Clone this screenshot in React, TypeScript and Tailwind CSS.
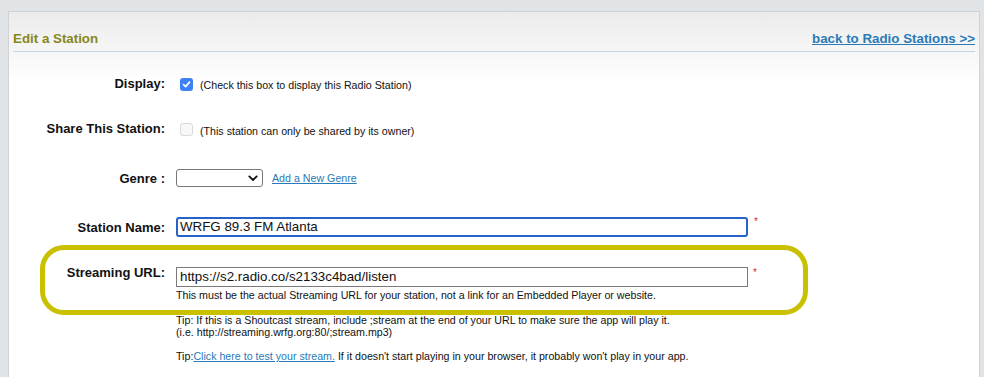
import React from "react";

const font = { fontFamily: '"Liberation Sans", Arial, Helvetica, sans-serif' };

function Checked() {
  return (
    <span className="ml-[4px] mt-[2px] inline-flex h-[13px] w-[13px] items-center justify-center rounded-[3px] bg-[#3c82f6]">
      <svg width="9" height="9" viewBox="0 0 10 10">
        <path d="M1.8 5.2 L4.1 7.4 L8.3 2.4" fill="none" stroke="#fff" strokeWidth="1.9" strokeLinecap="round" strokeLinejoin="round" />
      </svg>
    </span>
  );
}

function Disabled() {
  return <span className="ml-[4px] mt-[2px] inline-block h-[13px] w-[13px] rounded-[3px] border border-[#d9d9d9] bg-[#f8f8f8]" />;
}

function Label({ children }: { children: React.ReactNode }) {
  return <div className="w-[167px] shrink-0 pr-[11px] text-right text-[13px] font-bold leading-[15px] text-[#111]">{children}</div>;
}

export default function App() {
  return (
    <div className="min-h-[377px] bg-[#e1e4e7] pl-[8px] pr-[4px] pt-[11px]" style={font}>
      {/* Panel */}
      <div className="relative h-[400px] border border-[#d2d2d2] bg-[linear-gradient(to_bottom,#ebebeb,#ffffff_70px)]">
        {/* Header */}
        <div className="mx-[4px] flex items-end justify-between border-b border-[#c5d5e9] pb-[4px] pt-[19px]">
          <span className="text-[13.33px] font-bold leading-[16px] text-[#87871a]">Edit a Station</span>
          <a href="#" className="text-[13.33px] font-bold leading-[16px] text-[#2b7ab7] underline">
            back to Radio Stations &gt;&gt;
          </a>
        </div>

        {/* Display */}
        <div className="mt-[24px] flex items-start">
          <Label>Display:</Label>
          <Checked />
          <span className="ml-[7px] mt-[3px] text-[10.67px] leading-[12px] text-[#111]">(Check this box to display this Radio Station)</span>
        </div>

        {/* Share */}
        <div className="mt-[30px] flex items-start">
          <Label>Share This Station:</Label>
          <Disabled />
          <span className="ml-[7px] mt-[4px] text-[10.67px] leading-[12px] text-[#111]">(This station can only be shared by its owner)</span>
        </div>

        {/* Genre */}
        <div className="mt-[32px] flex items-center">
          <Label>Genre :</Label>
          <div className="flex h-[18px] w-[87px] items-center justify-end rounded-[3px] border border-[#777] bg-white pr-[4px]">
            <svg width="10" height="7" viewBox="0 0 10 7">
              <path d="M1.3 1.4 L5 5 L8.7 1.4" fill="none" stroke="#111" strokeWidth="1.8" strokeLinecap="round" strokeLinejoin="round" />
            </svg>
          </div>
          <a href="#" className="ml-[9px] text-[10.67px] leading-[13px] text-[#2b7ab7] underline">Add a New Genre</a>
        </div>

        {/* Station Name */}
        <div className="mt-[30px] flex items-center">
          <Label>Station Name:</Label>
          <div className="flex h-[20px] w-[572px] items-center rounded-[3px] border-2 border-[#2563c9] bg-white pl-[2px] text-[13.33px] text-[#111]">
            WRFG 89.3 FM Atlanta
          </div>
          <span className="ml-[6px] self-start text-[10px] leading-[10px] text-[#e02a2a]">*</span>
        </div>

        {/* Streaming URL */}
        <div className="mt-[28px] flex items-start">
          <Label>Streaming URL:</Label>
          <div className="flex flex-col">
            <div className="flex items-start">
              <div className="mt-[2px] flex h-[20px] w-[572px] items-center border border-[#7a7a7a] bg-white pl-[3px] text-[13.33px] text-[#111]">
                https://s2.radio.co/s2133c4bad/listen
              </div>
              <span className="ml-[5px] mt-[3px] text-[10px] leading-[10px] text-[#e02a2a]">*</span>
            </div>
            <div className="mt-[2px] text-[10.67px] leading-[12px] text-[#111]">
              This must be the actual Streaming URL for your station, not a link for an Embedded Player or website.
            </div>
            <div className="mt-[13px] text-[10.67px] leading-[12px] text-[#111]">
              Tip: If this is a Shoutcast stream, include ;stream at the end of your URL to make sure the app will play it.
              <br />
              (i.e. http://streaming.wrfg.org:80/;stream.mp3)
            </div>
            <div className="mt-[12px] text-[10.67px] leading-[12px] text-[#111]">
              Tip:<a href="#" className="text-[#2b7ab7] underline">Click here to test your stream.</a> If it doesn't start playing in your browser, it probably won't play in your app.
            </div>
          </div>
        </div>

        {/* Highlight annotation */}
        <div className="pointer-events-none absolute left-[31px] top-[233px] h-[70px] w-[768px] rounded-[24px] border-[5px] border-[#c9c000]" />
      </div>
    </div>
  );
}
